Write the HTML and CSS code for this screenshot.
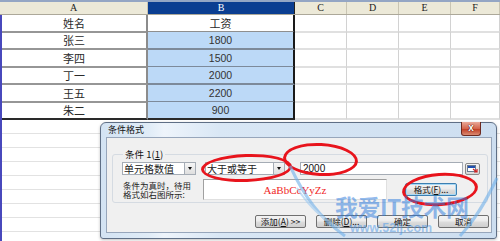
FILE: index.html
```html
<!DOCTYPE html>
<html lang="zh-CN">
<head>
  <meta charset="UTF-8" />
  <title>条件格式</title>
  <link rel="stylesheet" href="styles.css">
</head>
<body>

  <!-- SHEET -->
  <div class="sheet">
    <div class="head-row">
      <div class="hcell">A</div>
      <div class="hcell sel">B</div>
      <div class="hcell">C</div>
      <div class="hcell">D</div>
      <div class="hcell">E</div>
      <div class="hcell">F</div>
    </div>
    <div class="row r17">
      <div class="cell ca">姓名</div>
      <div class="cell cb active">工资</div>
      <div class="cell"></div><div class="cell"></div><div class="cell"></div><div class="cell"></div>
    </div>
    <div class="row r18">
      <div class="cell ca">张三</div>
      <div class="cell cb num">1800</div>
      <div class="cell"></div><div class="cell"></div><div class="cell"></div><div class="cell"></div>
    </div>
    <div class="row r17">
      <div class="cell ca">李四</div>
      <div class="cell cb num">1500</div>
      <div class="cell"></div><div class="cell"></div><div class="cell"></div><div class="cell"></div>
    </div>
    <div class="row r18">
      <div class="cell ca">丁一</div>
      <div class="cell cb num">2000</div>
      <div class="cell"></div><div class="cell"></div><div class="cell"></div><div class="cell"></div>
    </div>
    <div class="row r17">
      <div class="cell ca">王五</div>
      <div class="cell cb num">2200</div>
      <div class="cell"></div><div class="cell"></div><div class="cell"></div><div class="cell"></div>
    </div>
    <div class="row r18 last">
      <div class="cell ca">朱二</div>
      <div class="cell cb num">900</div>
      <div class="cell"></div><div class="cell"></div><div class="cell"></div><div class="cell"></div>
    </div>
    <div class="rest">
      <div class="rest-row"></div><div class="rest-row"></div><div class="rest-row"></div><div class="rest-row"></div>
      <div class="rest-row"></div><div class="rest-row"></div><div class="rest-row"></div><div class="rest-row"></div>
      <div class="rest-row"></div>
    </div>
  </div>

  <!-- DIALOG -->
  <div class="dialog">
    <div class="title">条件格式</div>
    <div class="close">x</div>
    <div class="dlg-body">
      <fieldset class="group">
        <legend>条件 1(<u>1</u>)</legend>
        <div class="cond-row">
          <div class="select s1"><span>单元格数值</span><i class="drop"></i></div>
          <div class="select s2"><span>大于或等于</span><i class="drop"></i></div>
          <div class="input">2000</div>
          <div class="pick">
            <svg width="11" height="8" viewBox="0 0 11 8">
              <rect x="0.5" y="0.5" width="8" height="6" fill="#fff" stroke="#6a7a90"/>
              <rect x="1" y="1" width="7" height="2" fill="#2050b0"/>
              <path d="M6 4 L10 7 M7 7 H10 V4" stroke="#d02020" stroke-width="1.2" fill="none"/>
            </svg>
          </div>
        </div>
        <div class="cond-row second">
          <div class="hint">条件为真时，待用<br>格式如右图所示:</div>
          <div class="preview">AaBbCcYyZz</div>
          <div class="btn focus">格式(<u>F</u>)...</div>
        </div>
      </fieldset>
      <div class="actions">
        <div class="btn">添加(<u>A</u>) &gt;&gt;</div>
        <div class="btn">删除(<u>D</u>)...</div>
        <div class="btn">确定</div>
        <div class="btn">取消</div>
      </div>
    </div>
  </div>

  <!-- ANNOTATIONS -->
  <div class="mark m1"></div>
  <div class="mark m2"></div>
  <div class="mark m3"></div>

  <!-- WATERMARK -->
  <div class="wm">
    <svg class="wings" width="220" height="90" viewBox="0 0 220 90">
      <path d="M5 8 C20 40 35 60 60 78" stroke="#6fb0ea" stroke-width="3" fill="none"/>
      <path d="M12 30 C25 50 38 62 55 70" stroke="#9ccaf2" stroke-width="2" fill="none"/>
      <path d="M212 20 C200 45 190 62 175 78" stroke="#6fb0ea" stroke-width="3" fill="none"/>
    </svg>
    <div class="wm-title">我爱IT技术网</div>
    <div class="wm-url">www.52ij.com</div>
  </div>

</body>
</html>
```

FILE: styles.css
```css
/* ===== Reset ===== */
*, *::before, *::after { margin:0; padding:0; box-sizing:border-box; }
body {
  width:500px; height:241px; overflow:hidden;
  background:#fff; color:#222;
  font-family:'Noto Sans CJK SC', sans-serif;
  position:relative;
}

/* ===== Sheet ===== */
.sheet { border-top:2px solid #94a6c4; }
.head-row {
  display:grid; grid-template-columns:148px 147px 52px 52px 52px 49px;
  height:13px; background:#ece9d8; border-bottom:1px solid #aca899;
}
.hcell {
  font-family:'Liberation Serif', serif; font-size:10px; line-height:12px;
  text-align:center; border-right:1px solid #c9c5b3; color:#222;
}
.hcell.sel { background:#0b3e91; color:#fff; border-right-color:#222; }
.row {
  display:grid; grid-template-columns:146px 147px 52px 52px 52px 49px;
  border-left:2px solid #4848bc;
}
.r17 { height:17px; }
.r18 { height:18px; }
.cell {
  display:flex; align-items:center; justify-content:center;
  border-right:1px solid #d2d2d2; border-bottom:2px solid #e0e0e0;
  font-size:11px; color:#2a2a2a;
}
.cell.ca { border-right:2px solid #8c8c8c; border-bottom-color:#969696; }
.cell.cb { border-right:2px solid #1a1a1a; border-bottom-color:#7d8a9a; background:#bcd9f7; }
.cell.cb.active { background:#fff; border-bottom-color:#8f8f8f; }
.cell.num { font-family:'Liberation Sans', sans-serif; font-size:10.5px; color:#333; }
.last .cell.ca, .last .cell.cb { border-bottom-color:#2a2a2a; }
.rest { border-left:2px solid #4848bc; }
.rest-row { height:14px; border-bottom:1px solid #e2e2e2; }

/* ===== Dialog ===== */
.dialog {
  position:absolute; left:100px; top:122px; width:397px; height:117px;
  border:1px solid #5f6f86; border-radius:6px 6px 3px 3px;
  background:linear-gradient(90deg, #d3e3f3 0%, #e0ecf7 12%, #eef4fb 16%, #d9e7f5 30%, #cddef0 100%);
  padding:0 4px 5px 5px;
  display:flex; flex-direction:column;
  box-shadow:0 1px 3px rgba(0,0,0,0.25);
}
.title { height:14px; font-size:9px; line-height:14px; padding-left:2px; color:#111; }
.close {
  position:absolute; top:-1px; right:15px; width:20px; height:14px;
  border:1px solid #6d2a20; border-top:none; border-radius:0 0 3px 3px;
  background:linear-gradient(#e9a898, #d4654c 50%, #c23f25 55%, #d98a72);
  color:#fff; font:bold 10px/12px 'Liberation Sans', sans-serif; text-align:center;
  text-shadow:0 0 1px #400, 0 0 1px #400;
}
.dlg-body {
  flex:1; background:#f0f0f0; border:1px solid #97a6bb;
  display:flex; flex-direction:column; padding:11px 0 4px 5px;
}

/* ===== Condition group ===== */
.group {
  width:376px; border:1px solid #d5dbe2; border-radius:3px;
  padding:3px 0 2px 9px; display:flex; flex-direction:column; gap:4px;
}
.group legend { font-size:9.5px; line-height:10px; padding:0 2px; margin-left:1px; color:#111; }
.cond-row { display:flex; align-items:center; height:13px; }
.cond-row.second { height:21px; }
.select {
  height:13px; background:#fff; border:1px solid #a5acb5;
  display:flex; align-items:center; justify-content:space-between;
  font-size:10px; line-height:11px; padding-left:1px;
}
.s1 { width:74px; }
.s2 { width:80px; margin-left:9px; }
.drop {
  width:11px; height:11px; border-left:1px solid #a5acb5;
  background:linear-gradient(#f6f6f6, #dedede); position:relative;
}
.drop::after {
  content:''; position:absolute; left:3px; top:4px;
  border-left:2.5px solid transparent; border-right:2.5px solid transparent; border-top:3px solid #111;
}
.input {
  width:163px; height:13px; margin-left:15px; background:#fff; border:1px solid #a5acb5;
  font:10px/11px 'Liberation Sans', sans-serif; padding-left:2px; color:#111;
}
.pick {
  width:15px; height:12px; margin-left:2px; border:1px solid #8a8a8a; border-radius:2px;
  background:linear-gradient(#f4f4f4, #d8d8d8);
  display:flex; align-items:center; justify-content:center;
}
.hint { width:73px; margin-left:1px; font-size:8.5px; line-height:9px; color:#222; }
.preview {
  width:184px; height:21px; margin-left:7px; background:#fff;
  border:1px solid #a0a0a0; border-right-color:#e0e0e0; border-bottom-color:#e0e0e0;
  display:flex; align-items:center; justify-content:center;
  font:11px 'Liberation Serif', serif; color:#f02828;
}
.btn {
  width:51px; height:13px; border:1px solid #707070; border-radius:2px;
  background:linear-gradient(#f3f3f3 0%, #ebebeb 48%, #dddddd 52%, #cfcfcf 100%);
  font-size:8.5px; line-height:11px; text-align:center; color:#111; white-space:nowrap;
}
.cond-row .btn { width:52px; margin-left:18px; }
.btn.focus { border-color:#3c7fb1; box-shadow:inset 0 0 0 1px #a8d8f4; }

/* ===== Buttons ===== */
.actions { margin-top:auto; display:flex; gap:10px; padding-left:143px; }

/* ===== Red marks ===== */
.mark { position:absolute; border:3px solid #e8141c; border-radius:50%; }
.m1 { left:201px; top:154px; width:91px; height:28px; transform:rotate(-2deg); }
.m2 { left:283px; top:143px; width:75px; height:33px; transform:rotate(3deg); }
.m3 { left:402px; top:173px; width:76px; height:33px; transform:rotate(-4deg); }

/* ===== Watermark ===== */
.wm { position:absolute; left:285px; top:158px; width:215px; height:83px; pointer-events:none; }
.wings { position:absolute; left:0; top:0; opacity:0.6; }
.wm-title {
  position:absolute; left:50px; top:36px;
  font-size:23px; font-weight:bold; line-height:24px; letter-spacing:-0.5px;
  color:rgba(40,120,220,0.5);
}
.wm-url {
  position:absolute; left:65px; top:63px;
  font:bold 12.5px/14px 'Liberation Sans', sans-serif; color:rgba(70,150,235,0.5);
}
```
